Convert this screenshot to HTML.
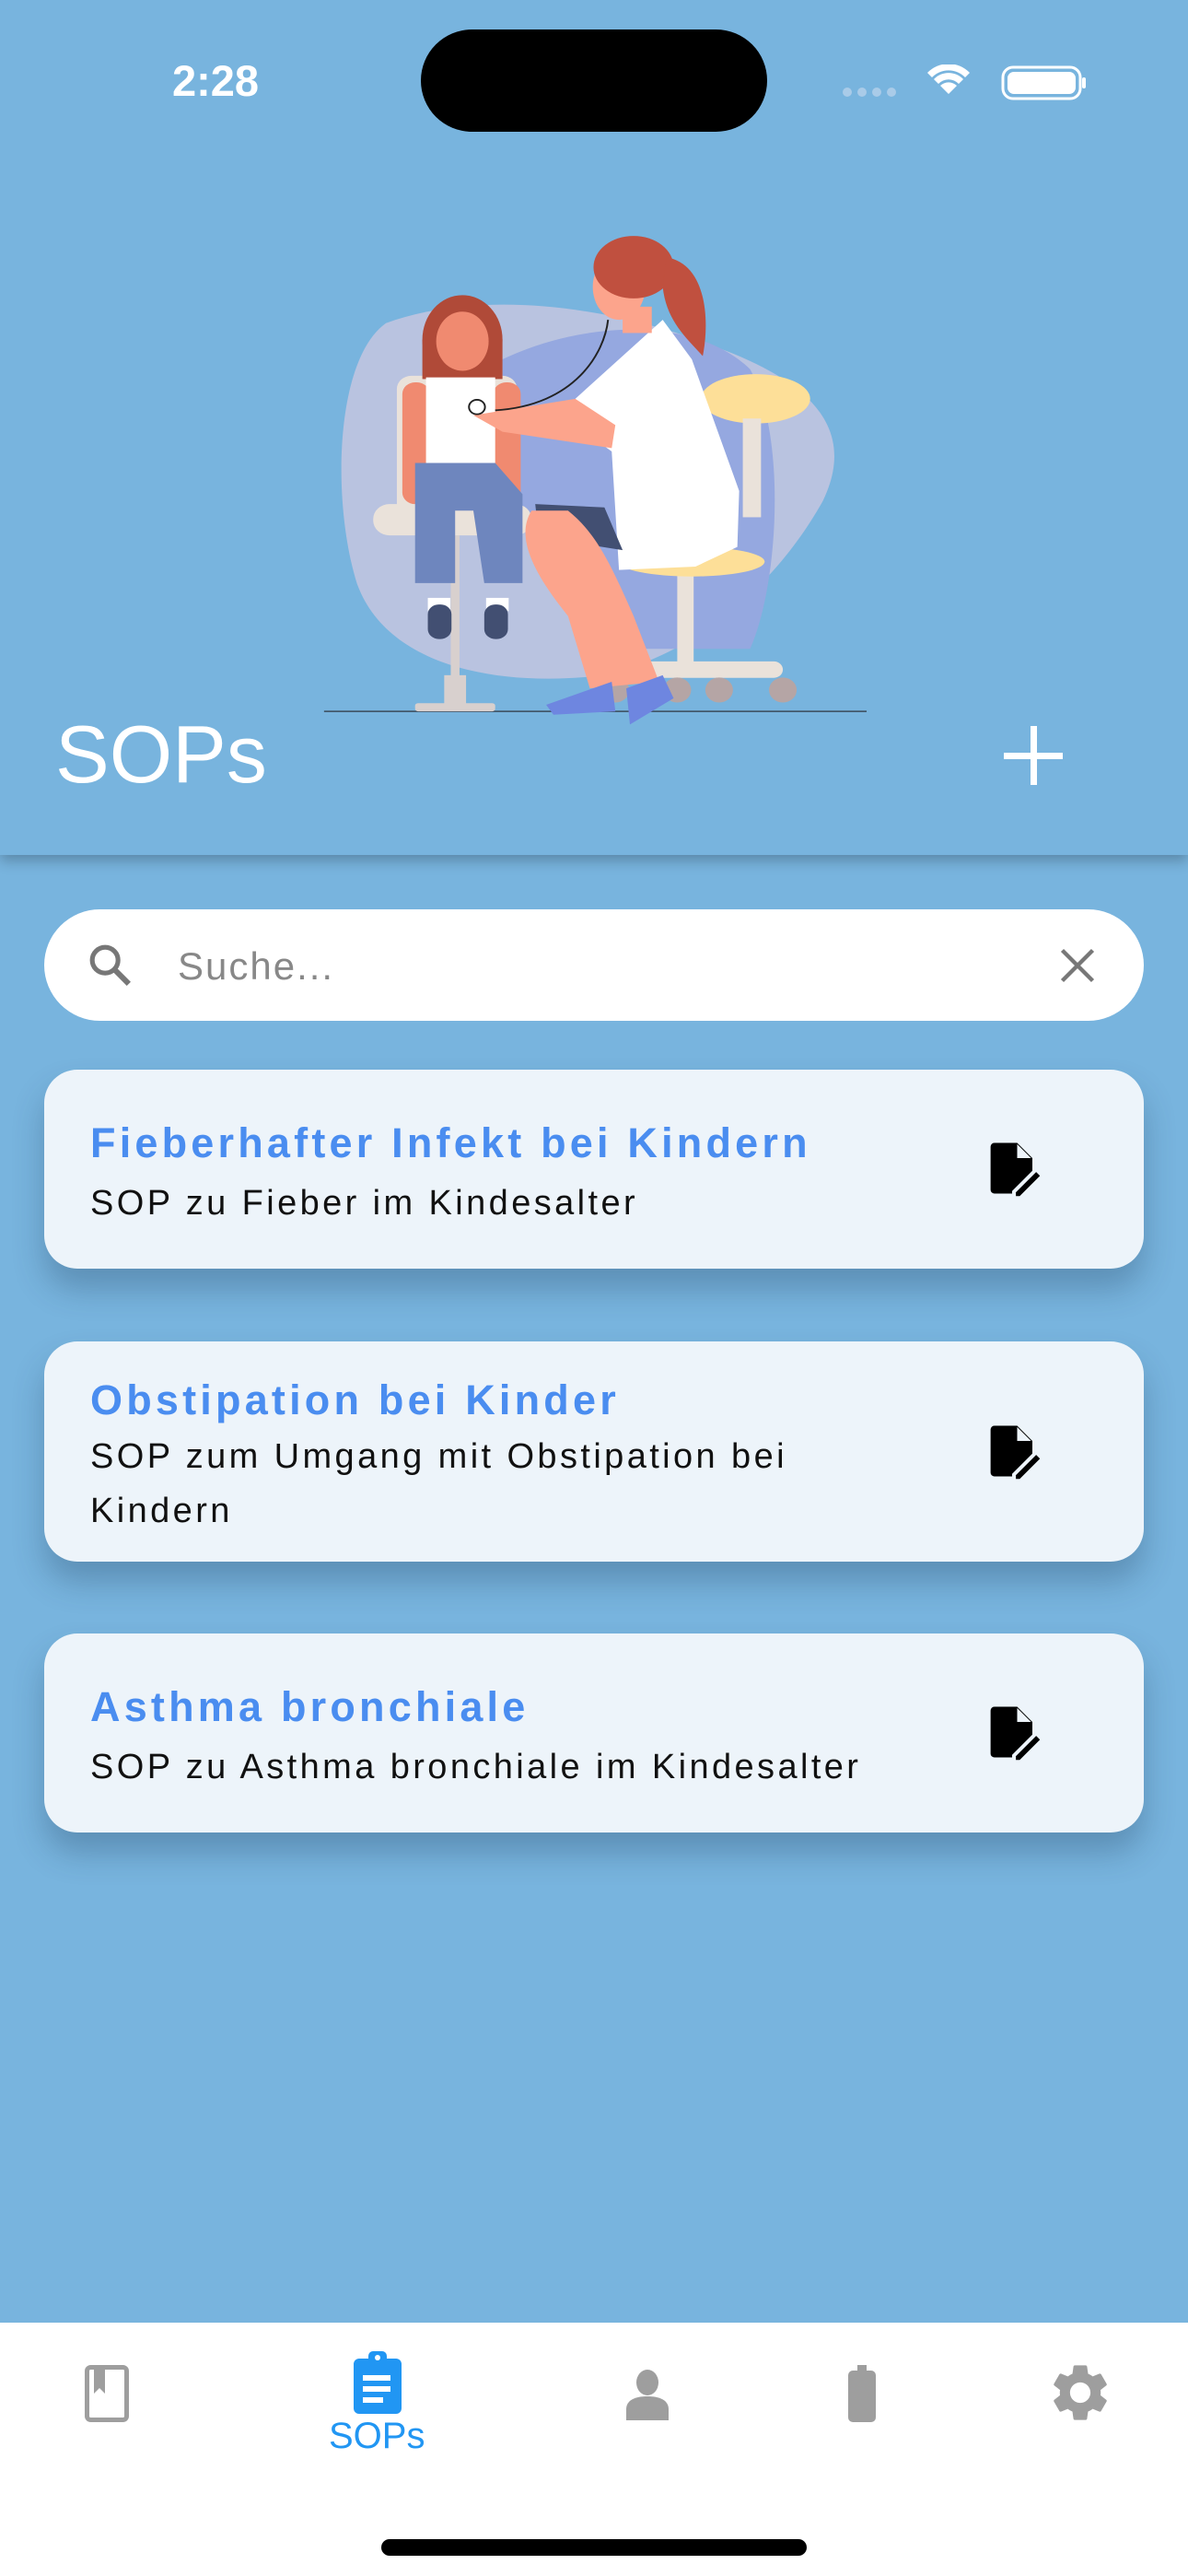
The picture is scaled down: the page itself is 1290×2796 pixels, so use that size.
<!DOCTYPE html>
<html><head><meta charset="utf-8"><style>
*{margin:0;padding:0;box-sizing:border-box}
body{width:1290px;height:2796px;background:#78B4DE;font-family:"Liberation Sans",sans-serif;position:relative;overflow:hidden}
.abs{position:absolute}
.header{left:0;top:0;width:1290px;height:928px;background:#78B4DE;box-shadow:0 6px 14px rgba(0,0,0,0.25)}
.card{position:absolute;left:48px;width:1194px;background:#EDF4FA;border-radius:36px;box-shadow:0 22px 34px rgba(30,60,90,0.3)}
.t{position:absolute;left:50px;color:#4A8DF0;font-weight:bold;font-size:45px;letter-spacing:4.2px;white-space:nowrap}
.s{position:absolute;left:50px;color:#111;font-size:38px;letter-spacing:3.4px;line-height:59px;white-space:nowrap}
.ic{position:absolute;left:1018px;width:66px;height:66px}
</style></head><body>
<div class="abs header"></div>
<div class="abs" style="left:187px;top:60px;font-size:47px;font-weight:bold;color:#fff">2:28</div>
<div class="abs" style="left:457px;top:32px;width:376px;height:111px;background:#000;border-radius:56px"></div>
<svg class="abs" style="left:912px;top:70px" width="270" height="40" viewBox="0 0 270 40">
<g fill="#a9cbe8"><circle cx="8" cy="30" r="5"/><circle cx="24" cy="30" r="5"/><circle cx="40" cy="30" r="5"/><circle cx="56" cy="30" r="5"/></g>
<path d="M118 32 l-9-9 a13 13 0 0 1 18 0z M102 16 a22 22 0 0 1 32 0 l-5 5 a15 15 0 0 0 -22 0z M95 9 a32 32 0 0 1 46 0 l-5 5 a25 25 0 0 0 -36 0z" fill="#fff"/>
<rect x="177" y="3" width="84" height="34" rx="11" fill="none" stroke="#fff" stroke-width="3"/>
<rect x="182" y="8" width="74" height="24" rx="7" fill="#fff"/>
<rect x="263" y="14" width="4" height="12" rx="2" fill="#fff"/>
</svg>
<svg class="abs" style="left:340px;top:240px" width="620" height="560" viewBox="0 0 1568 1568" preserveAspectRatio="none">
<path d="M200 310 C450 210 800 250 1100 380 C1350 480 1500 620 1400 850 C1300 1050 1100 1300 800 1380 C500 1420 200 1350 120 1100 C50 850 60 420 200 310z" fill="#B9C3E0"/>
<path d="M520 420 C750 300 1050 290 1200 450 C1300 650 1280 1100 1200 1300 L900 1300 C700 1150 520 1000 520 420z" fill="#95A8E0"/>
<line x1="30" y1="1490" x2="1520" y2="1490" stroke="#3a4a5a" stroke-width="4"/>
<rect x="230" y="470" width="330" height="430" rx="40" fill="#EAE2DA"/>
<rect x="165" y="860" width="435" height="95" rx="45" fill="#EAE2DA"/>
<rect x="378" y="955" width="24" height="530" fill="#D8D0CE"/>
<rect x="280" y="1465" width="220" height="25" rx="8" fill="#D8D0CE"/>
<rect x="360" y="1380" width="60" height="90" fill="#D8D0CE"/>
<ellipse cx="410" cy="360" rx="110" ry="135" fill="#B04A38"/>
<rect x="300" y="360" width="220" height="120" fill="#B04A38"/>
<ellipse cx="410" cy="365" rx="72" ry="90" fill="#F08A70"/>
<rect x="245" y="490" width="75" height="370" rx="35" fill="#F08A70"/>
<rect x="495" y="490" width="75" height="370" rx="35" fill="#F08A70"/>
<path d="M310 475 L500 475 L500 740 L310 740z" fill="#fff"/>
<path d="M280 735 L500 735 L575 830 L575 1100 L470 1100 L440 880 L390 880 L390 1100 L280 1100z" fill="#6E86BE"/>
<rect x="315" y="1145" width="62" height="40" fill="#fff"/><rect x="475" y="1145" width="62" height="40" fill="#fff"/>
<rect x="315" y="1165" width="65" height="105" rx="30" fill="#424F72"/><rect x="470" y="1165" width="65" height="105" rx="30" fill="#424F72"/>
<ellipse cx="1215" cy="540" rx="150" ry="75" fill="#FDDF98"/>
<rect x="1180" y="600" width="50" height="300" fill="#EAE2DA"/>
<rect x="1000" y="1060" width="45" height="290" fill="#EAE2DA"/>
<rect x="790" y="1338" width="500" height="50" rx="25" fill="#EAE2DA"/>
<g fill="#B5A5A5"><circle cx="830" cy="1425" r="38"/><circle cx="1000" cy="1425" r="38"/><circle cx="1115" cy="1425" r="38"/><circle cx="1290" cy="1425" r="38"/></g>
<ellipse cx="1040" cy="1035" rx="200" ry="45" fill="#FDDF98"/>
<path d="M720 540 L960 300 L1040 420 L1170 820 L1165 990 L1050 1050 L840 1060 L820 700 L770 660z" fill="#fff"/>
<path d="M610 860 L800 870 L850 1000 L620 960z" fill="#424F72"/>
<path d="M600 880 C560 950 590 1050 700 1200 L760 1420 L950 1400 L880 1200 C820 1050 780 950 700 880z" fill="#FCA48C"/>
<path d="M640 1470 L820 1400 L830 1490 L660 1500z" fill="#6E86E0"/>
<path d="M860 1420 L960 1380 L990 1450 L870 1530z" fill="#6E86E0"/>
<path d="M440 590 L720 540 L830 620 L820 690 L520 640z" fill="#FCA48C"/>
<ellipse cx="840" cy="200" rx="72" ry="100" fill="#FCA48C"/>
<rect x="850" y="260" width="80" height="80" fill="#FCA48C"/>
<ellipse cx="880" cy="140" rx="110" ry="95" fill="#C0503F"/>
<path d="M970 110 C1080 130 1090 300 1070 410 C1020 350 970 300 960 200z" fill="#C0503F"/>
<path d="M810 300 C800 400 720 560 500 575" stroke="#222" stroke-width="5" fill="none"/>
<circle cx="450" cy="565" r="22" fill="#fff" stroke="#222" stroke-width="5"/>
</svg>
<div class="abs" style="left:60px;top:768px;font-size:88px;color:#fff">SOPs</div>
<div class="abs" style="left:1090px;top:817px;width:64px;height:7px;background:#fff"></div>
<div class="abs" style="left:1119px;top:788px;width:7px;height:64px;background:#fff"></div>
<div class="abs" style="left:48px;top:987px;width:1194px;height:121px;background:#fff;border-radius:61px"></div>
<svg class="abs" style="left:92px;top:1020px" width="56" height="56" viewBox="0 0 24 24"><circle cx="9.5" cy="9.5" r="6" fill="none" stroke="#777" stroke-width="2.2"/><path d="M14 14l6.5 6.5" stroke="#777" stroke-width="2.6"/></svg>
<div class="abs" style="left:193px;top:1025px;font-size:42px;color:#888;letter-spacing:2px">Suche...</div>
<svg class="abs" style="left:1148px;top:1026px" width="44" height="44" viewBox="0 0 24 24"><path d="M3 3L21 21M21 3L3 21" stroke="#777" stroke-width="2.4"/></svg>

<div class="card" style="top:1161px;height:216px">
<div class="t" style="top:54px">Fieberhafter Infekt bei Kindern</div>
<div class="s" style="top:116px">SOP zu Fieber im Kindesalter</div>
<svg class="ic" style="top:74px" viewBox="0 0 24 24"><path d="M5 2h9l6 6v5l-8 8v1H5a1.5 1.5 0 0 1-1.5-1.5V3.5A1.5 1.5 0 0 1 5 2z" fill="#000"/><path d="M14 2.5v5.5h5.5z" fill="#EDF4FA"/><path d="M21.5 13.5l1.5 1.5-8 8h-1.5v-1.5z" fill="#000"/></svg>
</div>
<div class="card" style="top:1456px;height:239px">
<div class="t" style="top:38px">Obstipation bei Kinder</div>
<div class="s" style="top:96px">SOP zum Umgang mit Obstipation bei<br>Kindern</div>
<svg class="ic" style="top:86px" viewBox="0 0 24 24"><path d="M5 2h9l6 6v5l-8 8v1H5a1.5 1.5 0 0 1-1.5-1.5V3.5A1.5 1.5 0 0 1 5 2z" fill="#000"/><path d="M14 2.5v5.5h5.5z" fill="#EDF4FA"/><path d="M21.5 13.5l1.5 1.5-8 8h-1.5v-1.5z" fill="#000"/></svg>
</div>
<div class="card" style="top:1773px;height:216px">
<div class="t" style="top:54px">Asthma bronchiale</div>
<div class="s" style="top:116px">SOP zu Asthma bronchiale im Kindesalter</div>
<svg class="ic" style="top:74px" viewBox="0 0 24 24"><path d="M5 2h9l6 6v5l-8 8v1H5a1.5 1.5 0 0 1-1.5-1.5V3.5A1.5 1.5 0 0 1 5 2z" fill="#000"/><path d="M14 2.5v5.5h5.5z" fill="#EDF4FA"/><path d="M21.5 13.5l1.5 1.5-8 8h-1.5v-1.5z" fill="#000"/></svg>
</div>

<div class="abs" style="left:0;top:2521px;width:1290px;height:275px;background:#fff"></div>
<svg class="abs" style="left:92px;top:2567px" width="48" height="62" viewBox="0 0 48 62"><rect x="2.5" y="2.5" width="43" height="57" rx="4" fill="none" stroke="#9e9e9e" stroke-width="5"/><path d="M10 5v26l6-6 6 6V5" fill="#9e9e9e"/></svg>
<svg class="abs" style="left:382px;top:2548px" width="56" height="74" viewBox="0 0 56 74"><rect x="2" y="12" width="52" height="60" rx="6" fill="#2196F3"/><rect x="18" y="4" width="20" height="14" rx="5" fill="#2196F3"/><circle cx="28" cy="11" r="3" fill="#fff"/><rect x="12" y="30" width="30" height="6" fill="#fff"/><rect x="12" y="42" width="30" height="6" fill="#fff"/><rect x="12" y="54" width="22" height="6" fill="#fff"/></svg>
<div class="abs" style="left:357px;top:2622px;font-size:40px;color:#2196F3">SOPs</div>
<svg class="abs" style="left:678px;top:2571px" width="50" height="56" viewBox="0 0 50 56"><ellipse cx="25" cy="15" rx="12" ry="14" fill="#9e9e9e"/><path d="M2 56v-12c0-10 10-14 23-14s23 4 23 14v12z" fill="#9e9e9e"/></svg>
<svg class="abs" style="left:920px;top:2567px" width="32" height="62" viewBox="0 0 32 62"><rect x="11" y="0" width="10" height="8" fill="#9e9e9e"/><rect x="1" y="6" width="30" height="56" rx="5" fill="#9e9e9e"/></svg>
<svg class="abs" style="left:1136px;top:2560px" width="74" height="74" viewBox="0 0 24 24"><path fill="#9e9e9e" d="M19.14 12.94c.04-.3.06-.61.06-.94 0-.32-.02-.64-.07-.94l2.03-1.58a.49.49 0 0 0 .12-.61l-1.920-3.32a.488.488 0 0 0-.59-.22l-2.39.96c-.5-.38-1.03-.7-1.62-.94l-.36-2.54a.484.484 0 0 0-.48-.41h-3.84c-.24 0-.43.17-.47.41l-.36 2.54c-.59.24-1.13.57-1.62.94l-2.39-.96c-.22-.08-.47 0-.59.22L2.74 8.87c-.12.21-.08.47.12.61l2.03 1.58c-.05.3-.09.63-.09.94s.02.64.07.94l-2.03 1.58a.49.49 0 0 0-.12.61l1.92 3.32c.12.22.37.29.59.22l2.39-.96c.5.38 1.030.7 1.62.94l.36 2.54c.05.24.24.41.48.41h3.84c.24 0 .44-.17.47-.41l.36-2.54c.59-.24 1.13-.56 1.62-.94l2.39.96c.22.08.47 0 .59-.22l1.92-3.32c.12-.22.07-.47-.12-.61l-2.01-1.58zM12 15.6c-1.98 0-3.6-1.62-3.6-3.6s1.62-3.6 3.6-3.6 3.6 1.62 3.6 3.6-1.62 3.6-3.6 3.6z"/></svg>
<div class="abs" style="left:414px;top:2756px;width:462px;height:18px;background:#000;border-radius:9px"></div>
</body></html>
